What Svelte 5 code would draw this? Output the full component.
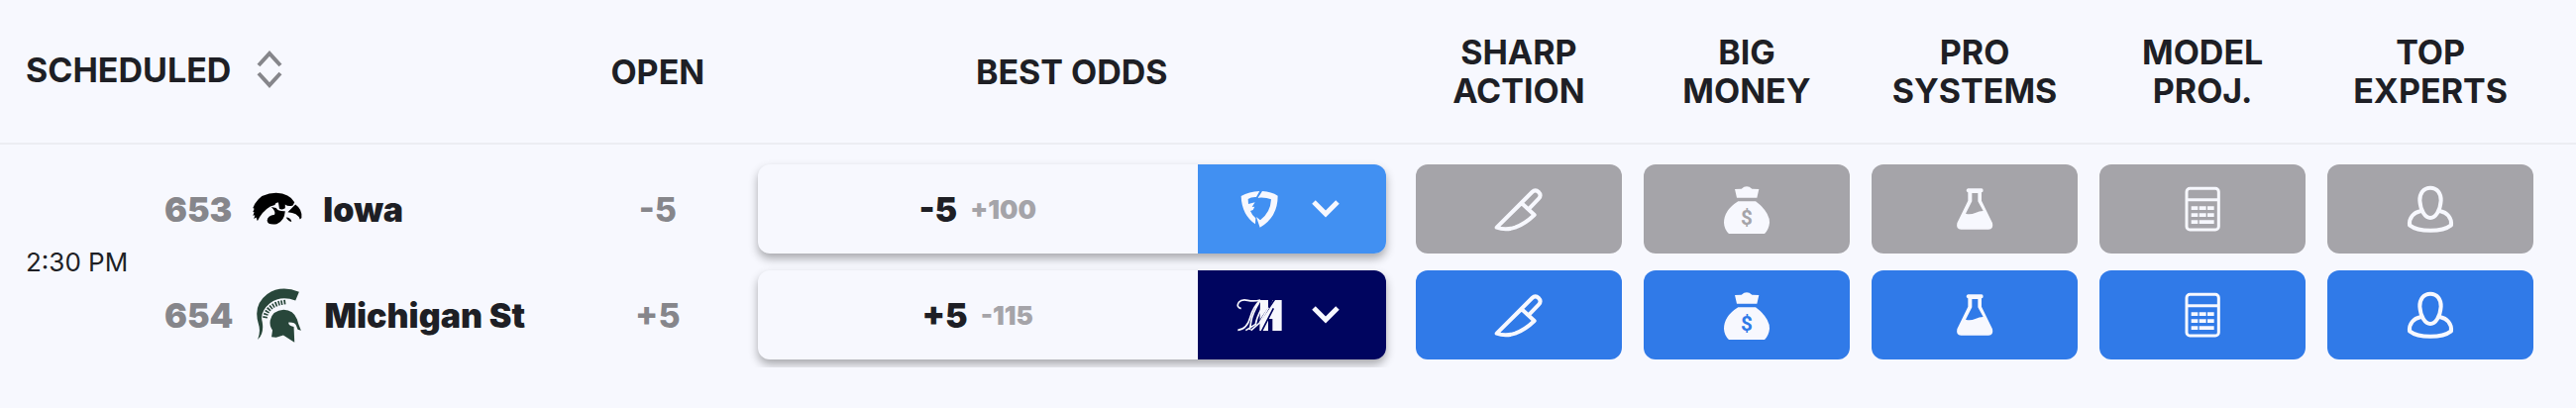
<script lang="ts">
	const indicators: { label: string[]; icon: string }[] = [
		{ label: ['SHARP', 'ACTION'], icon: 'knife' },
		{ label: ['BIG', 'MONEY'], icon: 'bag' },
		{ label: ['PRO', 'SYSTEMS'], icon: 'flask' },
		{ label: ['MODEL', 'PROJ.'], icon: 'calculator' },
		{ label: ['TOP', 'EXPERTS'], icon: 'person' }
	];

	const teams = [
		{ id: 653, name: 'Iowa', logo: 'iowa', open: '-5', line: '-5', juice: '+100', book: 'fanduel', active: false },
		{ id: 654, name: 'Michigan St', logo: 'spartan', open: '+5', line: '+5', juice: '-115', book: 'mgm', active: true }
	];
</script>

<table>
	<colgroup>
		<col class="col-time" />
		<col />
		<col class="col-open" />
		<col class="col-odds" />
		{#each indicators as indicator, i}
			<col class={i === indicators.length - 1 ? 'col-last' : 'col-indicator'} />
		{/each}
	</colgroup>
	<thead>
		<tr>
			<th colspan="2" class="scheduled">
				<button class="sort">
					SCHEDULED
					<svg class="sort-icon" viewBox="0 0 26 38" aria-hidden="true">
						<path d="M2 15 13 3l11 12M2 23l11 12 11-12" />
					</svg>
				</button>
			</th>
			<th>OPEN</th>
			<th>BEST ODDS</th>
			{#each indicators as { label }}
				<th class="indicator">{label[0]}<br />{label[1]}</th>
			{/each}
		</tr>
	</thead>
	<tbody>
		{#each teams as team, i}
			<tr>
				{#if i === 0}
					<td class="time" rowspan="2">2:30 PM</td>
				{/if}
				<td>
					<div class="team">
						<span class="rotation">{team.id}</span>
						<span class="logo">
							{#if team.logo === 'iowa'}
								<svg class="iowa" viewBox="0 0 160 108" aria-hidden="true">
									<path
										d="M10 38Q30 4 76 4q42 2 57 29l-5 10q-14 5-24-3v12q-9 6-18 1l-3-19q-9-2-11 8l-14 4Q32 61 18 92l-4-12-7 5 3-12-6 2 4-11-4-1 4-10-4-2z"
									/>
									<path d="M61 48l15 3q6 11 28 10-2 30-26 40-28 4-30-11 1-15 23-18 5-10-10-24z" />
									<path d="M112 64l24-24q22 15 19 42l-5 4q-7-20-38-22zM107 80q15 0 17 14-11-2-17-14z" />
								</svg>
							{:else}
								<svg class="spartan" viewBox="0 0 150 172" aria-hidden="true">
									<path
										d="M12 160q10-26 2-49-17-57 27-90Q82-8 138 14l-11 27Q83 24 49 49 17 76 26 106q6 36-14 54z"
									/>
									<path
										d="M54 152l3-21q-10-14-7-30 7-30 41-32 30 1 41 29l4 14 8 20-10-3-5-13q-3-10-23-9-2 9 16 14l2 47-34-22-22 7z"
									/>
									<path class="crest" d="M34 94q7-43 65-49" />
								</svg>
							{/if}
						</span>
						<span class="name">{team.name}</span>
					</div>
				</td>
				<td class="open">{team.open}</td>
				<td class="odds-cell">
					<div class="odds">
						<button class="price">
							<span class="line">{team.line}</span>
							<span class="juice">{team.juice}</span>
						</button>
						<button class="book {team.book}" aria-label="Choose sportsbook">
							{#if team.book === 'fanduel'}
								<svg class="book-logo" viewBox="0 0 138 120">
									<path
										d="M14 21Q38 7 70 6L60 24q-15-1-25 6l1 15 20-5-9 14 8-1-5 10-8 3q5 13 16 22l-1 18Q16 78 14 21z"
									/>
									<path d="M78 6q28 2 47 14 0 65-54 96L60 84l12 10q31-23 33-63-16-7-40-5z" />
								</svg>
							{:else}
								<svg class="book-logo" viewBox="0 0 138 120">
									<path d="M72 15h24v30l14-30h27v93h-28V72H96v36H70z" />
									<path class="slash" d="M70 80 116 12M76 110l36-70" />
									<path
										class="script"
										d="M14 41Q-2 36 7 22q8-10 27-6t38-1Q50 36 42 66 32 104 4 106M72 17Q48 54 44 82l-4 23M88 20Q62 62 58 88L28 107M97 38 70 84l-26 23"
									/>
								</svg>
							{/if}
							<svg class="chevron" viewBox="0 0 28 18"><path d="M2 2l12 12L26 2" /></svg>
						</button>
					</div>
				</td>
				{#each indicators as { label, icon }}
					<td class="indicator">
						<button class="signal" class:active={team.active} aria-label={label.join(' ')}>
							<svg viewBox="0 0 150 150" aria-hidden="true">
								{#if icon === 'knife'}
									<path
										class="stroke"
										d="M8 131 115 24q10-10 20 0t0 20l-31 32M83 57l39 36q-28 27-58 38-30 10-56 0z"
									/>
								{:else if icon === 'bag'}
									<path d="M39 15l20-1q16-14 32 0l21 1-6 26H45zM49 52h53q43 32 42 65-2 21-16 34H22Q7 138 6 117q0-38 43-65z" />
									<text x="75" y="124">$</text>
								{:else if icon === 'flask'}
									<path
										fill-rule="evenodd"
										d="M55 13h41q5 0 5 6t-5 6v25l33 68q4 19-12 19H34q-16 0-12-19l33-68V25q-5-1-5-6t5-6zM67 27v25L48 89q14 4 29-2 12-6 24-6L85 52V27z"
									/>
								{:else if icon === 'calculator'}
									<rect class="stroke thin" x="27" y="13" width="97" height="125" rx="10" />
									<path class="stroke thin" d="M27 47h97" />
									<path
										d="M41 67h20v11H41zM65 67h21v11H65zM90 67h20v11H90zM41 88h20v11H41zM65 88h21v11H65zM90 88h20v11H90zM41 109h20v11H41zM65 109h45v11H65z"
									/>
								{:else}
									<path
										class="stroke"
										d="M75 11c21 0 33 17 32 39-2 29-16 52-32 52S45 79 43 50c-1-22 11-39 32-39zM46 81c-22 5-36 20-34 43 28 22 98 22 126 0 2-23-12-38-34-43"
									/>
								{/if}
							</svg>
						</button>
					</td>
				{/each}
			</tr>
		{/each}
	</tbody>
</table>

<style>
	:global(body) {
		margin: 0;
		background: #f7f8fe;
	}
	table {
		--ink: #1e1f25;
		--muted: #86868b;
		--light: #a5a4a9;
		--paper: #f7f8fe;
		width: 100%;
		table-layout: fixed;
		border-collapse: collapse;
		color: var(--ink);
		font-family: Inter, sans-serif;
		font-size: 34px;
		line-height: 39px;
	}
	.col-time {
		width: 166px;
	}
	.col-open {
		width: 6.3%;
	}
	.col-odds {
		width: 25.85%;
	}
	.col-indicator {
		width: 8.85%;
	}
	.col-last {
		width: 10.07%;
	}
	button {
		border: 0;
		padding: 0;
		background: none;
		color: inherit;
		font: inherit;
		cursor: pointer;
	}
	svg {
		display: block;
		fill: currentColor;
	}
	th {
		height: 144px;
		padding: 0;
		border-bottom: 2px solid #ecedf2;
		font-weight: 700;
		text-align: center;
	}
	.scheduled {
		padding-left: 26px;
		text-align: left;
	}
	.sort {
		display: flex;
		align-items: center;
		gap: 26px;
		padding-bottom: 4px;
	}
	.sort-icon {
		width: 26px;
		height: 38px;
	}
	.sort-icon path {
		fill: none;
		stroke: var(--muted);
		stroke-width: 4;
	}
	td {
		padding: 9px 0 8px;
	}
	tbody tr:first-child td {
		padding-top: 20px;
	}
	.time {
		padding-left: 26px;
		font-size: 26px;
		white-space: nowrap;
	}
	.team {
		display: flex;
		align-items: center;
		gap: 20px;
		font-weight: 900;
		white-space: nowrap;
	}
	.rotation,
	.open {
		color: var(--muted);
	}
	.open {
		font-weight: 800;
		text-align: center;
	}
	.logo {
		display: flex;
		justify-content: center;
		width: 52px;
	}
	.iowa {
		width: 53px;
		height: 36px;
		color: #000;
	}
	.spartan {
		width: 50px;
		height: 57px;
		color: #28463a;
	}
	.crest {
		fill: none;
		stroke: currentColor;
		stroke-width: 14;
		stroke-dasharray: 5 4;
	}
	.odds-cell {
		padding-inline: 19px;
	}
	.odds {
		display: flex;
		height: 90px;
		border-radius: 12px;
		background: var(--paper);
		box-shadow: 0 5px 10px rgba(0, 0, 0, 0.32);
	}
	.price {
		display: flex;
		flex: 1;
		align-items: center;
		justify-content: center;
		gap: 13px;
		font-weight: 900;
	}
	.juice {
		color: var(--light);
		font-size: 26px;
	}
	.book {
		display: flex;
		align-items: center;
		justify-content: center;
		gap: 30px;
		width: 30%;
		padding-right: 8px;
		border-radius: 0 12px 12px 0;
		color: var(--paper);
	}
	.fanduel {
		background: #4190f2;
	}
	.mgm {
		background: #00055f;
	}
	.book-logo {
		width: 46px;
		height: 40px;
	}
	.slash,
	.script {
		fill: none;
		stroke: #00055f;
		stroke-width: 5;
	}
	.script {
		stroke: currentColor;
	}
	.chevron {
		width: 28px;
		height: 18px;
	}
	.chevron path {
		fill: none;
		stroke: currentColor;
		stroke-width: 5;
	}
	td.indicator {
		padding-inline: 11px;
	}
	.indicator:last-child {
		padding-right: 43px;
	}
	th.indicator:last-child {
		padding-left: 11px;
	}
	.signal {
		--tint: var(--light);
		display: flex;
		align-items: center;
		justify-content: center;
		width: 100%;
		height: 90px;
		border-radius: 12px;
		background: var(--tint);
		color: var(--paper);
	}
	.signal.active {
		--tint: #307ae8;
	}
	.signal svg {
		width: 50px;
		height: 50px;
	}
	.stroke {
		fill: none;
		stroke: currentColor;
		stroke-width: 12;
		stroke-linejoin: round;
	}
	.thin {
		stroke-width: 9;
	}
	text {
		fill: var(--tint);
		font-family: Roboto, sans-serif;
		font-size: 62px;
		font-weight: 700;
		text-anchor: middle;
	}
</style>
